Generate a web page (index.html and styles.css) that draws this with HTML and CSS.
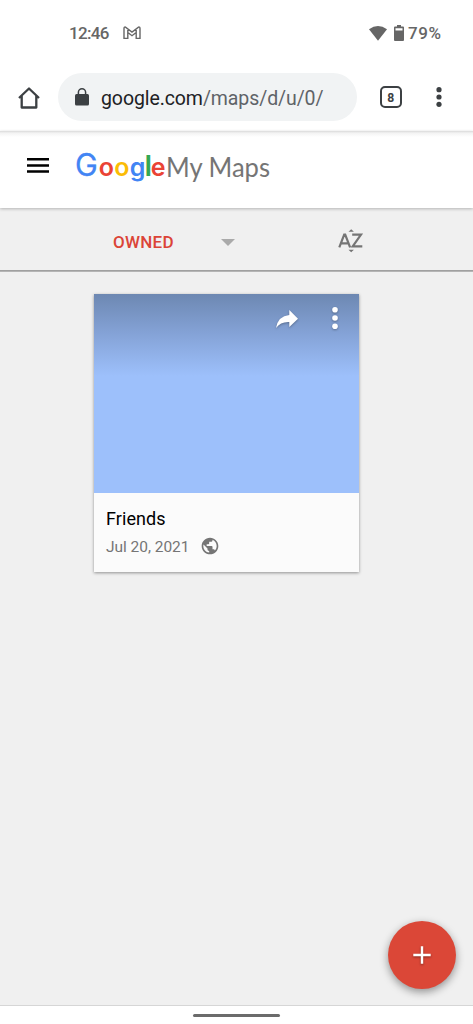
FILE: index.html
```html
<!DOCTYPE html>
<html lang="en">
<head>
<meta charset="utf-8">
<title>Google My Maps</title>
<link rel="stylesheet" href="styles.css">
</head>
<body>
<div class="screen">
  <div class="status">
    <svg class="clock" width="42" height="20"><text x="0" y="14" textLength="40.500">12:46</text></svg>
    <svg class="gmail" width="18" height="14" viewBox="0 0 18 14"><path d="M1 12.4V2.5Q1 .8 2.5 1.1L9 6 15.500 1.100Q17 .8 17 2.500V12.400H13.200V6.500L9 9.700 4.800 6.500V12.400ZM4.800 6.500V2.800M13.200 6.500V2.800"/></svg>
    <svg class="wifi" width="18" height="15" viewBox="0 0 18 15"><path d="M0 3.200Q9-3 18 3.200L9 14.800Z"/></svg>
    <svg class="battery" width="10" height="16" viewBox="0 0 10 16"><path d="M3 0h4v1.500h2q1 0 1 1V15q0 1-1 1H1q-1 0-1-1V2.500q0-1 1-1h2ZM1.500 3.200V5.500h7V3.200Z" fill-rule="evenodd"/></svg>
    <svg class="percent" width="35" height="20"><text x="0" y="14" textLength="33">79%</text></svg>
  </div>
  <div class="browser">
    <svg class="home" width="22" height="22" viewBox="0 0 22 22"><path d="M1 11 11 1.500 21 11M3.700 9V20.500H18.300V9"/></svg>
    <div class="address">
      <svg class="lock" width="14" height="18" viewBox="0 0 14 18"><rect y="6" width="14" height="11.500" rx="1.500"/><path d="M3.400 7V4.300a3.600 3.600 0 0 1 7.200 0V7" fill="none" stroke="#3c4043" stroke-width="1.500"/></svg>
      <svg class="url" width="230" height="28"><text x="0" y="21.500" textLength="222.500"><tspan class="domain">google.com</tspan><tspan class="path">/maps/d/u/0/</tspan></text></svg>
    </div>
    <div class="tabs"><svg width="10" height="14"><text x="1.300" y="11.800" textLength="7" lengthAdjust="spacingAndGlyphs">8</text></svg></div>
    <svg class="dots" width="6" height="20" viewBox="0 0 6 20"><circle cx="3" cy="2.700" r="2.600"/><circle cx="3" cy="10" r="2.600"/><circle cx="3" cy="17.300" r="2.600"/></svg>
  </div>
  <header class="header">
    <svg class="menu" width="22" height="15" viewBox="0 0 22 15"><path d="M0 1.300H22M0 7.400H22M0 13.500H22"/></svg>
    <svg class="logo" width="200" height="44">
      <text class="google" y="28"><tspan class="cap" x="2" fill="#4285f4">G</tspan><tspan x="25.800" fill="#ea4335">o</tspan><tspan x="41.300" fill="#fbbc05">o</tspan><tspan x="56.800" fill="#4285f4">g</tspan><tspan class="tall" x="71.600" fill="#34a853">l</tspan><tspan x="77.700" fill="#ea4335">e</tspan></text>
      <text class="product" x="93" y="29" textLength="104" lengthAdjust="spacingAndGlyphs">My Maps</text>
    </svg>
  </header>
  <nav class="filters">
    <svg class="owned" width="64" height="24"><text x="1" y="18" textLength="60.500">OWNED</text></svg>
    <svg class="caret" width="14" height="7" viewBox="0 0 14 7"><path d="M0 0H14L7 7Z"/></svg>
    <svg class="sort" width="26" height="24" viewBox="0 0 26 24"><path d="M1.300 18.300 6.200 5.500H7.200L12.100 18.300M3.200 14.300H10.300M14.200 5.600H23L14.700 17.400H24.300" fill="none" stroke="#757575" stroke-width="2.200"/><path d="M10.500 2.800 13.200.2 15.900 2.800ZM10.500 20.700 13.200 23.300 15.900 20.700Z"/></svg>
  </nav>
  <main class="content">
    <article class="card">
      <div class="cover">
        <svg class="share" width="22" height="18" viewBox="0 0 22 18"><path d="M13.300 0 22 8.700 13.300 17V12Q4.500 11.500 0 18 2 6 13.300 5Z"/></svg>
        <svg class="more" width="6" height="22" viewBox="0 0 6 22"><circle cx="3" cy="2.800" r="2.800"/><circle cx="3" cy="11" r="2.800"/><circle cx="3" cy="19.200" r="2.800"/></svg>
      </div>
      <div class="info">
        <svg class="title" width="80" height="24"><text x="0" y="18" textLength="59.500">Friends</text></svg>
        <div class="meta">
          <svg class="date" width="96" height="22"><text x="0" y="16" textLength="83.500">Jul 20, 2021</text></svg>
          <svg class="globe" width="20" height="20" viewBox="0 0 24 24"><path d="M12 2C6.480 2 2 6.480 2 12s4.480 10 10 10 10-4.480 10-10S17.520 2 12 2zm-1 17.930c-3.950-.49-7-3.850-7-7.930 0-.62.080-1.210.210-1.790L9 15v1c0 1.100.9 2 2 2v1.930zm6.900-2.540c-.26-.81-1-1.390-1.900-1.390h-1v-3c0-.55-.45-1-1-1H8v-2h2c.55 0 1-.45 1-1V7h2c1.100 0 2-.9 2-2v-.41c2.930 1.190 5 4.060 5 7.410 0 2.080-.8 3.970-2.100 5.390z"/></svg>
        </div>
      </div>
    </article>
  </main>
  <div class="system"><div class="handle"></div></div>
  <button class="add" aria-label="Add"><svg width="18" height="18" viewBox="0 0 18 18"><path d="M9 .3V17.700M.3 9H17.700"/></svg></button>
</div>
</body>
</html>
```

FILE: styles.css
```css
* { box-sizing: border-box; }
body { margin: 0; font-family: Roboto, "Liberation Sans", sans-serif; }
svg { display: block; flex: none; overflow: visible; }
.screen { position: relative; display: flex; flex-direction: column; width: 473px; height: 1024px; overflow: hidden; background: #f0f0f0; }
.status { display: flex; align-items: flex-start; height: 64px; padding: 25px 30px 0 69px; background: #fff; fill: #666; }
.clock { font-size: 17px; font-weight: 500; }
.gmail { margin: 1px 0 0 12px; fill: none; stroke: #666; stroke-width: 1.400; }
.wifi { margin: .5px 0 0 auto; }
.battery { margin: 0 4px 0 7px; }
.percent { font-size: 17px; font-weight: 500; }
.browser { display: flex; align-items: center; height: 67px; padding: 0 31px 1px 18px; background: #fff; }
.home { margin-top: 1px; fill: none; stroke: #3c4043; stroke-width: 2.300; stroke-linejoin: round; }
.address { display: flex; align-items: center; width: 299px; height: 48px; margin-left: 18px; padding-left: 17px; border-radius: 24px; background: #f1f3f4; }
.lock { margin-top: -1px; fill: #3c4043; }
.url { margin-left: 12px; font-size: 19.500px; }
.domain { fill: #202124; }
.path { fill: #5f6368; }
.tabs { display: flex; align-items: center; justify-content: center; width: 22px; height: 22px; margin-left: 23px; border: 2px solid #3c4043; border-radius: 5px; fill: #3c4043; font-size: 13.500px; font-weight: 700; }
.dots { margin-left: auto; fill: #3c4043; }
.header { z-index: 1; display: flex; align-items: flex-start; height: 77px; padding: 27px 0 0 27px; background: linear-gradient(#dadada, #f3f3f3 2px, #fff 6px); box-shadow: 0 1px 3px rgba(0,0,0,.25); }
.menu { margin-right: 24px; stroke: #000; stroke-width: 2.500; }
.logo { margin-top: -10px; }
.google { font-family: Inter, sans-serif; font-size: 25px; font-weight: 600; }
.cap { font-size: 30.500px; font-weight: 400; stroke: #4285f4; stroke-width: .3px; }
.tall { font-size: 29px; }
.product { font-family: Lato, sans-serif; font-size: 27px; fill: #757575; }
.filters { display: flex; align-items: flex-start; height: 64px; margin-bottom: -1px; padding: 22px 0 0 112px; background: linear-gradient(#f0f0f0 62px, #a0a0a0 62px, #a0a0a0 63px, #b5b5b5 63px); }
.owned { font-size: 17px; font-weight: 500; fill: #db4437; }
.caret { margin: 9px 0 0 45px; fill: #aaa; }
.sort { margin: -1.500px 0 0 103px; fill: #757575; }
.content { flex: 1; padding: 23px 0 0 94px; }
.card { width: 265px; height: 278px; background: #fbfbfb; box-shadow: 0 1px 3px rgba(0,0,0,.4); }
.cover { display: flex; align-items: flex-start; justify-content: flex-end; height: 199px; padding: 13px 21px 0 0; background: linear-gradient(#6d88b2, #84a2d6 39px, #9dc0fb 82px); fill: #fff; }
.share { margin: 3px 34px 0 0; }
.share, .more { filter: drop-shadow(0 1px 1px rgba(0,0,0,.3)); }
.info { padding: 14px 12px; }
.title { font-size: 18px; fill: #000; }
.meta { display: flex; margin-top: 5px; }
.date { font-size: 15.500px; fill: #757575; }
.globe { margin: 0 0 0 -2px; fill: #757575; }
.system { display: flex; justify-content: center; height: 19px; padding-top: 8px; border-top: 1px solid #d6d6d6; background: #fff; }
.handle { width: 87px; height: 3px; border-radius: 2px; background: #6b6b6b; }
.add { position: absolute; left: 388px; top: 921px; display: flex; align-items: center; justify-content: center; width: 68px; height: 68px; padding: 0; border: 0; border-radius: 50%; background: #db4737; box-shadow: 0 3px 9px rgba(0,0,0,.4); }
.add svg { fill: none; stroke: #fff; stroke-width: 2.400; filter: drop-shadow(0 1px 1px rgba(0,0,0,.4)); }
```
